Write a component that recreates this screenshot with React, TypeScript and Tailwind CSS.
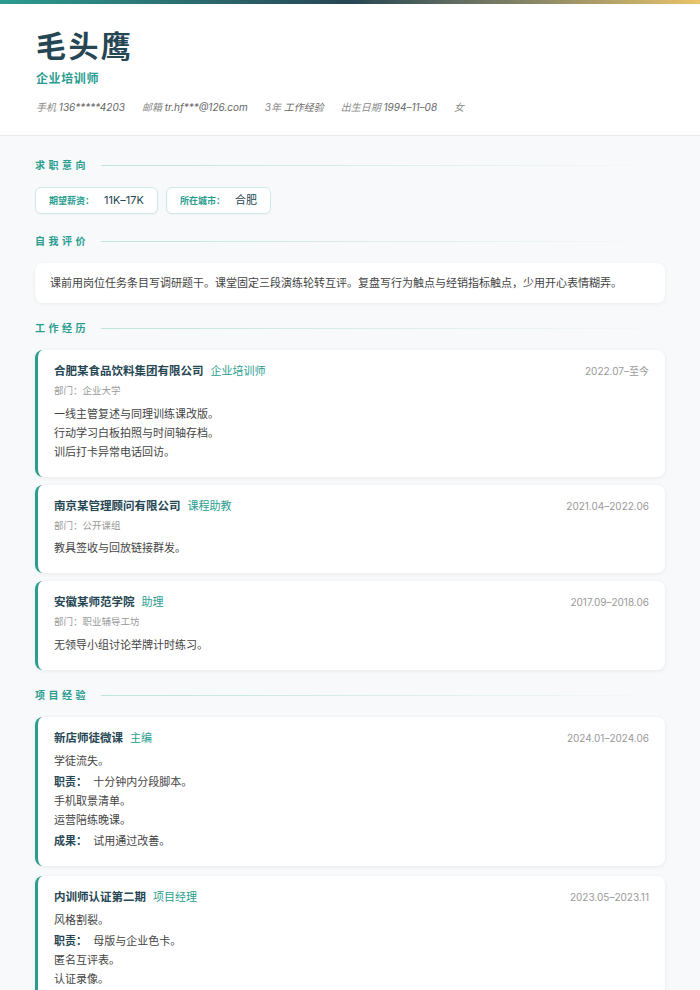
const font = { fontFamily: '"Inter", "Noto Sans CJK SC", sans-serif' }

const work = [
  { org: "合肥某食品饮料集团有限公司", role: "企业培训师", date: "2022.07–至今", dept: "企业大学", lines: ["一线主管复述与同理训练课改版。", "行动学习白板拍照与时间轴存档。", "训后打卡异常电话回访。"] },
  { org: "南京某管理顾问有限公司", role: "课程助教", date: "2021.04–2022.06", dept: "公开课组", lines: ["教具签收与回放链接群发。"] },
  { org: "安徽某师范学院", role: "助理", date: "2017.09–2018.06", dept: "职业辅导工坊", lines: ["无领导小组讨论举牌计时练习。"] },
]

const projects = [
  { name: "新店师徒微课", role: "主编", date: "2024.01–2024.06", intro: "学徒流失。", duty: ["十分钟内分段脚本。", "手机取景清单。", "运营陪练晚课。"], result: "试用通过改善。" },
  { name: "内训师认证第二期", role: "项目经理", date: "2023.05–2023.11", intro: "风格割裂。", duty: ["母版与企业色卡。", "匿名互评表。", "认证录像。"], result: "" },
]

function Heading({ title }: { title: string }) {
  return (
    <div className="flex items-center gap-[12px] mb-[14px]">
      <span className="text-[10px] font-bold tracking-[0.35em] text-[#2a9d8f]">{title}</span>
      <div className="h-px flex-1 bg-gradient-to-r from-[#bfe3dd] to-transparent" />
    </div>
  )
}

function Card({ children }: { children: React.ReactNode }) {
  return (
    <div className="rounded-[8px] border-l-[3px] border-[#2a9d8f] bg-white px-[16px] pt-[13px] pb-[15px] shadow-[0_1px_4px_rgba(0,0,0,0.07)]">
      {children}
    </div>
  )
}

export default function App() {
  return (
    <div style={font} className="min-h-[990px] bg-[#f7f9fa] text-[#333]">
      <div className="h-[4px] bg-gradient-to-r from-[#2a9d8f] via-[#264653] to-[#e9c46a]" />
      <div className="bg-white border-b border-[#e8ecee] px-[36px] pt-[24px] pb-[20px]">
        <h1 className="text-[30px] font-bold leading-[36px] tracking-[0.08em] text-[#264653]">毛头鹰</h1>
        <div className="mt-[6px] text-[12px] font-semibold tracking-[0.05em] text-[#2a9d8f]">企业培训师</div>
        <div className="mt-[12px] flex gap-[17px] text-[10px] italic text-[#888]">
          <span>手机 <span className="text-[#666]">136*****4203</span></span>
          <span>邮箱 <span className="text-[#666]">tr.hf***@126.com</span></span>
          <span>3年 <span className="text-[#666]">工作经验</span></span>
          <span>出生日期 <span className="text-[#666]">1994–11–08</span></span>
          <span>女</span>
        </div>
      </div>

      <div className="px-[35px] pt-[22px]">
        <Heading title="求职意向" />
        <div className="flex gap-[8px] mb-[20px]">
          {[["期望薪资：", "11K–17K"], ["所在城市：", "合肥"]].map(([k, v]) => (
            <div key={k} className="flex items-center gap-[10px] h-[27px] rounded-[6px] border border-[#cdebe6] bg-white px-[13px] shadow-[0_1px_2px_rgba(0,0,0,0.04)]">
              <span className="text-[9px] font-semibold text-[#2a9d8f]">{k}</span>
              <span className="text-[11px] text-[#264653]">{v}</span>
            </div>
          ))}
        </div>

        <Heading title="自我评价" />
        <div className="mb-[18px] rounded-[8px] bg-white px-[15px] py-[11px] text-[11px] leading-[18px] text-[#444] shadow-[0_1px_4px_rgba(0,0,0,0.06)]">
          课前用岗位任务条目写调研题干。课堂固定三段演练轮转互评。复盘写行为触点与经销指标触点，少用开心表情糊弄。
        </div>

        <Heading title="工作经历" />
        <div className="flex flex-col gap-[8px] mb-[18px]">
          {work.map((w) => (
            <Card key={w.org}>
              <div className="flex items-baseline justify-between">
                <div className="flex items-baseline gap-[7px]">
                  <span className="text-[11.5px] font-bold text-[#264653]">{w.org}</span>
                  <span className="text-[11px] text-[#2a9d8f]">{w.role}</span>
                </div>
                <span className="text-[10px] text-[#999]">{w.date}</span>
              </div>
              <div className="mt-[4px] text-[9.5px] text-[#999]">部门：{w.dept}</div>
              <div className="mt-[6px] text-[11px] leading-[19px] text-[#444]">
                {w.lines.map((l) => <div key={l}>{l}</div>)}
              </div>
            </Card>
          ))}
        </div>

        <Heading title="项目经验" />
        <div className="flex flex-col gap-[10px]">
          {projects.map((p) => (
            <Card key={p.name}>
              <div className="flex items-baseline justify-between">
                <div className="flex items-baseline gap-[7px]">
                  <span className="text-[11.5px] font-bold text-[#264653]">{p.name}</span>
                  <span className="text-[11px] text-[#2a9d8f]">{p.role}</span>
                </div>
                <span className="text-[10px] text-[#999]">{p.date}</span>
              </div>
              <div className="mt-[5px] text-[11px] leading-[19px] text-[#444]">
                <div>{p.intro}</div>
                <div className="mt-[2px]"><span className="font-semibold text-[#264653]">职责：</span>&nbsp; {p.duty[0]}</div>
                {p.duty.slice(1).map((d) => <div key={d}>{d}</div>)}
                {p.result && <div className="mt-[2px]"><span className="font-semibold text-[#264653]">成果：</span>&nbsp; {p.result}</div>}
              </div>
            </Card>
          ))}
        </div>
      </div>
    </div>
  )
}
